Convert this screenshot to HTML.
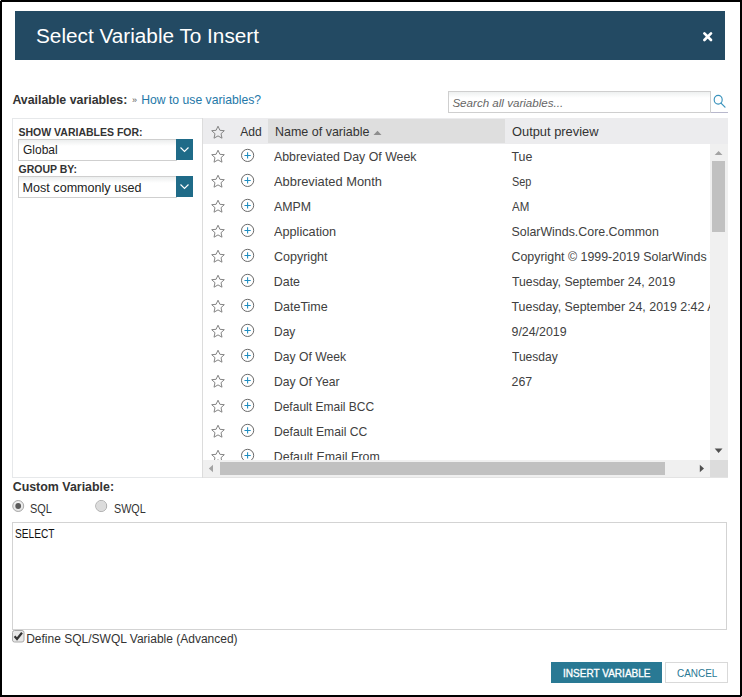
<!DOCTYPE html>
<html><head><meta charset="utf-8"><style>
html,body{margin:0;padding:0;}
body{width:742px;height:697px;position:relative;overflow:hidden;background:#fff;font-family:"Liberation Sans",sans-serif;}
.t{position:absolute;white-space:nowrap;}
.r{position:absolute;}
</style></head><body>
<div class="r" style="left:0px;top:0px;width:742px;height:697px;background:#fff;border:2px solid #000;box-sizing:border-box;"></div>
<div class="r" style="left:0px;top:0px;width:1px;height:1px;background:#c8c8c8;"></div>
<div class="r" style="left:741px;top:696px;width:1px;height:1px;background:#c8c8c8;"></div>
<div class="r" style="left:15px;top:11px;width:710px;height:49px;background:#234a63;"></div>
<div class="t" style="left:36.00px;top:26.24px;font-size:20.75px;line-height:20.75px;color:#fff;font-weight:normal;font-style:normal;">Select Variable To Insert</div>
<svg class="r" style="left:702px;top:31px" width="12" height="12" viewBox="0 0 12 12"><path d="M2.4 2.4L9 9M9 2.4L2.4 9" stroke="#fff" stroke-width="2.7" stroke-linecap="round"/></svg>
<div class="t" style="left:12.40px;top:93.54px;font-size:12.36px;line-height:12.36px;color:#333;font-weight:bold;font-style:normal;">Available variables:</div>
<div class="t" style="left:132.00px;top:95.88px;font-size:9px;line-height:9px;color:#555;font-weight:normal;font-style:normal;">&raquo;</div>
<div class="t" style="left:141.20px;top:93.67px;font-size:12.2px;line-height:12.2px;color:#2478a8;font-weight:normal;font-style:normal;">How to use variables?</div>
<div class="r" style="left:448px;top:91px;width:263px;height:22px;background:linear-gradient(#eef0f0 0px,#fff 6px);border:1px solid #cfcfcf;box-sizing:border-box;"></div>
<div class="t" style="left:452.40px;top:96.68px;font-size:11.6px;line-height:11.6px;color:#666;font-weight:normal;font-style:italic;">Search all variables...</div>
<div class="r" style="left:711px;top:112px;width:17px;height:1px;background:#b8b8cc;"></div>
<svg class="r" style="left:711px;top:92px" width="17" height="18" viewBox="0 0 17 18"><ellipse cx="7.2" cy="7.7" rx="4.0" ry="4.4" fill="none" stroke="#3a93bd" stroke-width="1.15"/><path d="M10 11.2L14 15.2" stroke="#3a93bd" stroke-width="1.2" stroke-linecap="round"/></svg>
<div class="r" style="left:12px;top:118px;width:191px;height:360px;border:1px solid #e6e8ea;box-sizing:border-box;"></div>
<div class="t" style="left:18.50px;top:127.11px;font-size:10.5px;line-height:10.5px;color:#333;font-weight:bold;font-style:normal;">SHOW VARIABLES FOR:</div>
<div class="r" style="left:18px;top:139px;width:159px;height:22px;background:linear-gradient(#eceeee 0px,#fff 6px);border:1px solid #cfcfcf;box-sizing:border-box;"></div>
<div class="r" style="left:176px;top:139px;width:17px;height:21px;background:#1f6b88;"></div>
<svg class="r" style="left:176px;top:139px" width="17" height="21" viewBox="0 0 17 21"><path d="M4.5 8.5L8.5 12.5L12.5 8.5" fill="none" stroke="#fff" stroke-width="1.1"/></svg>
<div class="t" style="left:22.60px;top:144.42px;font-size:12.5px;line-height:12.5px;color:#222;font-weight:normal;font-style:normal;transform:scaleX(0.9576);transform-origin:0 0;">Global</div>
<div class="t" style="left:18.50px;top:164.31px;font-size:10.5px;line-height:10.5px;color:#333;font-weight:bold;font-style:normal;">GROUP BY:</div>
<div class="r" style="left:18px;top:176px;width:159px;height:22px;background:linear-gradient(#eceeee 0px,#fff 6px);border:1px solid #cfcfcf;box-sizing:border-box;"></div>
<div class="r" style="left:176px;top:176px;width:17px;height:21px;background:#1f6b88;"></div>
<svg class="r" style="left:176px;top:176px" width="17" height="21" viewBox="0 0 17 21"><path d="M4.5 8.5L8.5 12.5L12.5 8.5" fill="none" stroke="#fff" stroke-width="1.1"/></svg>
<div class="t" style="left:22.60px;top:181.74px;font-size:12.59px;line-height:12.59px;color:#222;font-weight:normal;font-style:normal;">Most commonly used</div>
<div class="r" style="left:202px;top:118px;width:1px;height:360px;background:#dcdcdc;"></div>
<div class="r" style="left:203px;top:118px;width:525px;height:26px;background:#ececee;"></div>
<div class="r" style="left:268px;top:119px;width:237px;height:24px;background:#dedede;"></div>
<svg class="r" style="left:210px;top:124.5px" width="16" height="15" viewBox="0 0 16 15"><path d="M8 1.2L9.9 5.3L14.3 5.7L11 8.7L12 13.2L8 10.9L4 13.2L5 8.7L1.7 5.7L6.1 5.3Z" fill="none" stroke="#858585" stroke-width="1" stroke-linejoin="round"/></svg>
<div class="t" style="left:240.20px;top:125.76px;font-size:12.1px;line-height:12.1px;color:#333;font-weight:normal;font-style:normal;">Add</div>
<div class="t" style="left:274.50px;top:126.03px;font-size:12.49px;line-height:12.49px;color:#333;font-weight:normal;font-style:normal;transform:scaleX(0.9999);transform-origin:0 0;">Name of variable</div>
<svg class="r" style="left:373px;top:130px" width="9" height="6" viewBox="0 0 9 6"><path d="M0.5 5L4.5 0.8L8.5 5Z" fill="#8e8e8e"/></svg>
<div class="t" style="left:511.50px;top:126.03px;font-size:12.49px;line-height:12.49px;color:#333;font-weight:normal;font-style:normal;transform:scaleX(1.0298);transform-origin:0 0;">Output preview</div>
<div class="r" style="left:203px;top:144px;width:507px;height:316px;overflow:hidden">
<svg class="r" style="left:7px;top:4.5px" width="16" height="15" viewBox="0 0 16 15"><path d="M8 1.2L9.9 5.3L14.3 5.7L11 8.7L12 13.2L8 10.9L4 13.2L5 8.7L1.7 5.7L6.1 5.3Z" fill="none" stroke="#858585" stroke-width="1" stroke-linejoin="round"/></svg>
<svg class="r" style="left:37px;top:4px" width="15" height="15" viewBox="0 0 15 15"><circle cx="7.6" cy="7.4" r="6.1" fill="none" stroke="#6a6a6a" stroke-width="1"/><path d="M7.6 4.3V10.5M4.5 7.4H10.7" stroke="#1e8cc0" stroke-width="1.05"/></svg>
<div class="t" style="left:70.80px;top:6.50px;font-size:12.4px;line-height:12.4px;color:#404040;font-weight:normal;font-style:normal;transform:scaleX(0.9965);transform-origin:0 0;">Abbreviated Day Of Week</div>
<div class="t" style="left:308.50px;top:6.50px;font-size:12.4px;line-height:12.4px;color:#404040;font-weight:normal;font-style:normal;">Tue</div>
<svg class="r" style="left:7px;top:29.5px" width="16" height="15" viewBox="0 0 16 15"><path d="M8 1.2L9.9 5.3L14.3 5.7L11 8.7L12 13.2L8 10.9L4 13.2L5 8.7L1.7 5.7L6.1 5.3Z" fill="none" stroke="#858585" stroke-width="1" stroke-linejoin="round"/></svg>
<svg class="r" style="left:37px;top:29px" width="15" height="15" viewBox="0 0 15 15"><circle cx="7.6" cy="7.4" r="6.1" fill="none" stroke="#6a6a6a" stroke-width="1"/><path d="M7.6 4.3V10.5M4.5 7.4H10.7" stroke="#1e8cc0" stroke-width="1.05"/></svg>
<div class="t" style="left:70.80px;top:31.50px;font-size:12.4px;line-height:12.4px;color:#404040;font-weight:normal;font-style:normal;transform:scaleX(1.0377);transform-origin:0 0;">Abbreviated Month</div>
<div class="t" style="left:308.50px;top:31.50px;font-size:12.4px;line-height:12.4px;color:#404040;font-weight:normal;font-style:normal;transform:scaleX(0.8756);transform-origin:0 0;">Sep</div>
<svg class="r" style="left:7px;top:54.5px" width="16" height="15" viewBox="0 0 16 15"><path d="M8 1.2L9.9 5.3L14.3 5.7L11 8.7L12 13.2L8 10.9L4 13.2L5 8.7L1.7 5.7L6.1 5.3Z" fill="none" stroke="#858585" stroke-width="1" stroke-linejoin="round"/></svg>
<svg class="r" style="left:37px;top:54px" width="15" height="15" viewBox="0 0 15 15"><circle cx="7.6" cy="7.4" r="6.1" fill="none" stroke="#6a6a6a" stroke-width="1"/><path d="M7.6 4.3V10.5M4.5 7.4H10.7" stroke="#1e8cc0" stroke-width="1.05"/></svg>
<div class="t" style="left:70.80px;top:56.50px;font-size:12.4px;line-height:12.4px;color:#404040;font-weight:normal;font-style:normal;transform:scaleX(0.9973);transform-origin:0 0;">AMPM</div>
<div class="t" style="left:308.50px;top:56.50px;font-size:12.4px;line-height:12.4px;color:#404040;font-weight:normal;font-style:normal;transform:scaleX(0.9297);transform-origin:0 0;">AM</div>
<svg class="r" style="left:7px;top:79.5px" width="16" height="15" viewBox="0 0 16 15"><path d="M8 1.2L9.9 5.3L14.3 5.7L11 8.7L12 13.2L8 10.9L4 13.2L5 8.7L1.7 5.7L6.1 5.3Z" fill="none" stroke="#858585" stroke-width="1" stroke-linejoin="round"/></svg>
<svg class="r" style="left:37px;top:79px" width="15" height="15" viewBox="0 0 15 15"><circle cx="7.6" cy="7.4" r="6.1" fill="none" stroke="#6a6a6a" stroke-width="1"/><path d="M7.6 4.3V10.5M4.5 7.4H10.7" stroke="#1e8cc0" stroke-width="1.05"/></svg>
<div class="t" style="left:70.80px;top:81.50px;font-size:12.4px;line-height:12.4px;color:#404040;font-weight:normal;font-style:normal;transform:scaleX(1.0248);transform-origin:0 0;">Application</div>
<div class="t" style="left:308.50px;top:81.50px;font-size:12.4px;line-height:12.4px;color:#404040;font-weight:normal;font-style:normal;">SolarWinds.Core.Common</div>
<svg class="r" style="left:7px;top:104.5px" width="16" height="15" viewBox="0 0 16 15"><path d="M8 1.2L9.9 5.3L14.3 5.7L11 8.7L12 13.2L8 10.9L4 13.2L5 8.7L1.7 5.7L6.1 5.3Z" fill="none" stroke="#858585" stroke-width="1" stroke-linejoin="round"/></svg>
<svg class="r" style="left:37px;top:104px" width="15" height="15" viewBox="0 0 15 15"><circle cx="7.6" cy="7.4" r="6.1" fill="none" stroke="#6a6a6a" stroke-width="1"/><path d="M7.6 4.3V10.5M4.5 7.4H10.7" stroke="#1e8cc0" stroke-width="1.05"/></svg>
<div class="t" style="left:70.80px;top:106.50px;font-size:12.4px;line-height:12.4px;color:#404040;font-weight:normal;font-style:normal;transform:scaleX(1.0093);transform-origin:0 0;">Copyright</div>
<div class="t" style="left:308.50px;top:106.50px;font-size:12.4px;line-height:12.4px;color:#404040;font-weight:normal;font-style:normal;">Copyright &copy; 1999-2019 SolarWinds Worldwide, LLC</div>
<svg class="r" style="left:7px;top:129.5px" width="16" height="15" viewBox="0 0 16 15"><path d="M8 1.2L9.9 5.3L14.3 5.7L11 8.7L12 13.2L8 10.9L4 13.2L5 8.7L1.7 5.7L6.1 5.3Z" fill="none" stroke="#858585" stroke-width="1" stroke-linejoin="round"/></svg>
<svg class="r" style="left:37px;top:129px" width="15" height="15" viewBox="0 0 15 15"><circle cx="7.6" cy="7.4" r="6.1" fill="none" stroke="#6a6a6a" stroke-width="1"/><path d="M7.6 4.3V10.5M4.5 7.4H10.7" stroke="#1e8cc0" stroke-width="1.05"/></svg>
<div class="t" style="left:70.80px;top:131.50px;font-size:12.4px;line-height:12.4px;color:#404040;font-weight:normal;font-style:normal;transform:scaleX(1.0);transform-origin:0 0;">Date</div>
<div class="t" style="left:308.50px;top:131.50px;font-size:12.4px;line-height:12.4px;color:#404040;font-weight:normal;font-style:normal;transform:scaleX(0.9879);transform-origin:0 0;">Tuesday, September 24, 2019</div>
<svg class="r" style="left:7px;top:154.5px" width="16" height="15" viewBox="0 0 16 15"><path d="M8 1.2L9.9 5.3L14.3 5.7L11 8.7L12 13.2L8 10.9L4 13.2L5 8.7L1.7 5.7L6.1 5.3Z" fill="none" stroke="#858585" stroke-width="1" stroke-linejoin="round"/></svg>
<svg class="r" style="left:37px;top:154px" width="15" height="15" viewBox="0 0 15 15"><circle cx="7.6" cy="7.4" r="6.1" fill="none" stroke="#6a6a6a" stroke-width="1"/><path d="M7.6 4.3V10.5M4.5 7.4H10.7" stroke="#1e8cc0" stroke-width="1.05"/></svg>
<div class="t" style="left:70.80px;top:156.50px;font-size:12.4px;line-height:12.4px;color:#404040;font-weight:normal;font-style:normal;transform:scaleX(1.0093);transform-origin:0 0;">DateTime</div>
<div class="t" style="left:308.50px;top:156.50px;font-size:12.4px;line-height:12.4px;color:#404040;font-weight:normal;font-style:normal;">Tuesday, September 24, 2019 2:42 AM</div>
<svg class="r" style="left:7px;top:179.5px" width="16" height="15" viewBox="0 0 16 15"><path d="M8 1.2L9.9 5.3L14.3 5.7L11 8.7L12 13.2L8 10.9L4 13.2L5 8.7L1.7 5.7L6.1 5.3Z" fill="none" stroke="#858585" stroke-width="1" stroke-linejoin="round"/></svg>
<svg class="r" style="left:37px;top:179px" width="15" height="15" viewBox="0 0 15 15"><circle cx="7.6" cy="7.4" r="6.1" fill="none" stroke="#6a6a6a" stroke-width="1"/><path d="M7.6 4.3V10.5M4.5 7.4H10.7" stroke="#1e8cc0" stroke-width="1.05"/></svg>
<div class="t" style="left:70.80px;top:181.50px;font-size:12.4px;line-height:12.4px;color:#404040;font-weight:normal;font-style:normal;transform:scaleX(0.9644);transform-origin:0 0;">Day</div>
<div class="t" style="left:308.50px;top:181.50px;font-size:12.4px;line-height:12.4px;color:#404040;font-weight:normal;font-style:normal;">9/24/2019</div>
<svg class="r" style="left:7px;top:204.5px" width="16" height="15" viewBox="0 0 16 15"><path d="M8 1.2L9.9 5.3L14.3 5.7L11 8.7L12 13.2L8 10.9L4 13.2L5 8.7L1.7 5.7L6.1 5.3Z" fill="none" stroke="#858585" stroke-width="1" stroke-linejoin="round"/></svg>
<svg class="r" style="left:37px;top:204px" width="15" height="15" viewBox="0 0 15 15"><circle cx="7.6" cy="7.4" r="6.1" fill="none" stroke="#6a6a6a" stroke-width="1"/><path d="M7.6 4.3V10.5M4.5 7.4H10.7" stroke="#1e8cc0" stroke-width="1.05"/></svg>
<div class="t" style="left:70.80px;top:206.50px;font-size:12.4px;line-height:12.4px;color:#404040;font-weight:normal;font-style:normal;transform:scaleX(0.9796);transform-origin:0 0;">Day Of Week</div>
<div class="t" style="left:308.50px;top:206.50px;font-size:12.4px;line-height:12.4px;color:#404040;font-weight:normal;font-style:normal;transform:scaleX(0.9726);transform-origin:0 0;">Tuesday</div>
<svg class="r" style="left:7px;top:229.5px" width="16" height="15" viewBox="0 0 16 15"><path d="M8 1.2L9.9 5.3L14.3 5.7L11 8.7L12 13.2L8 10.9L4 13.2L5 8.7L1.7 5.7L6.1 5.3Z" fill="none" stroke="#858585" stroke-width="1" stroke-linejoin="round"/></svg>
<svg class="r" style="left:37px;top:229px" width="15" height="15" viewBox="0 0 15 15"><circle cx="7.6" cy="7.4" r="6.1" fill="none" stroke="#6a6a6a" stroke-width="1"/><path d="M7.6 4.3V10.5M4.5 7.4H10.7" stroke="#1e8cc0" stroke-width="1.05"/></svg>
<div class="t" style="left:70.80px;top:231.50px;font-size:12.4px;line-height:12.4px;color:#404040;font-weight:normal;font-style:normal;transform:scaleX(0.9807);transform-origin:0 0;">Day Of Year</div>
<div class="t" style="left:308.50px;top:231.50px;font-size:12.4px;line-height:12.4px;color:#404040;font-weight:normal;font-style:normal;">267</div>
<svg class="r" style="left:7px;top:254.5px" width="16" height="15" viewBox="0 0 16 15"><path d="M8 1.2L9.9 5.3L14.3 5.7L11 8.7L12 13.2L8 10.9L4 13.2L5 8.7L1.7 5.7L6.1 5.3Z" fill="none" stroke="#858585" stroke-width="1" stroke-linejoin="round"/></svg>
<svg class="r" style="left:37px;top:254px" width="15" height="15" viewBox="0 0 15 15"><circle cx="7.6" cy="7.4" r="6.1" fill="none" stroke="#6a6a6a" stroke-width="1"/><path d="M7.6 4.3V10.5M4.5 7.4H10.7" stroke="#1e8cc0" stroke-width="1.05"/></svg>
<div class="t" style="left:70.80px;top:256.50px;font-size:12.4px;line-height:12.4px;color:#404040;font-weight:normal;font-style:normal;transform:scaleX(0.97);transform-origin:0 0;">Default Email BCC</div>
<svg class="r" style="left:7px;top:279.5px" width="16" height="15" viewBox="0 0 16 15"><path d="M8 1.2L9.9 5.3L14.3 5.7L11 8.7L12 13.2L8 10.9L4 13.2L5 8.7L1.7 5.7L6.1 5.3Z" fill="none" stroke="#858585" stroke-width="1" stroke-linejoin="round"/></svg>
<svg class="r" style="left:37px;top:279px" width="15" height="15" viewBox="0 0 15 15"><circle cx="7.6" cy="7.4" r="6.1" fill="none" stroke="#6a6a6a" stroke-width="1"/><path d="M7.6 4.3V10.5M4.5 7.4H10.7" stroke="#1e8cc0" stroke-width="1.05"/></svg>
<div class="t" style="left:70.80px;top:281.50px;font-size:12.4px;line-height:12.4px;color:#404040;font-weight:normal;font-style:normal;transform:scaleX(0.982);transform-origin:0 0;">Default Email CC</div>
<svg class="r" style="left:7px;top:304.5px" width="16" height="15" viewBox="0 0 16 15"><path d="M8 1.2L9.9 5.3L14.3 5.7L11 8.7L12 13.2L8 10.9L4 13.2L5 8.7L1.7 5.7L6.1 5.3Z" fill="none" stroke="#858585" stroke-width="1" stroke-linejoin="round"/></svg>
<svg class="r" style="left:37px;top:304px" width="15" height="15" viewBox="0 0 15 15"><circle cx="7.6" cy="7.4" r="6.1" fill="none" stroke="#6a6a6a" stroke-width="1"/><path d="M7.6 4.3V10.5M4.5 7.4H10.7" stroke="#1e8cc0" stroke-width="1.05"/></svg>
<div class="t" style="left:70.80px;top:306.50px;font-size:12.4px;line-height:12.4px;color:#404040;font-weight:normal;font-style:normal;">Default Email From</div>
</div>
<div class="r" style="left:710px;top:144px;width:18px;height:316px;background:#f0f0f0;"></div>
<svg class="r" style="left:714px;top:150px" width="10" height="6" viewBox="0 0 10 6"><path d="M0.7 5L4.6 1L8.5 5Z" fill="#a3a3a3"/></svg>
<div class="r" style="left:712px;top:161px;width:13px;height:71px;background:#c1c1c1;"></div>
<svg class="r" style="left:714px;top:448px" width="10" height="6" viewBox="0 0 10 6"><path d="M0.7 0.6L4.6 5L8.5 0.6Z" fill="#505050"/></svg>
<div class="r" style="left:203px;top:460px;width:507px;height:17px;background:#f0f0f0;"></div>
<svg class="r" style="left:208px;top:464px" width="6" height="9" viewBox="0 0 6 9"><path d="M5 0.7L0.8 4.5L5 8.2Z" fill="#a3a3a3"/></svg>
<div class="r" style="left:220px;top:462px;width:445px;height:13px;background:#c1c1c1;"></div>
<svg class="r" style="left:699px;top:464px" width="6" height="9" viewBox="0 0 6 9"><path d="M0.8 0.7L5 4.5L0.8 8.2Z" fill="#505050"/></svg>
<div class="r" style="left:710px;top:460px;width:18px;height:17px;background:#dcdcdc;"></div>
<div class="r" style="left:203px;top:477px;width:525px;height:1px;background:#e3e3e3;"></div>
<div class="t" style="left:12.70px;top:480.69px;font-size:12.42px;line-height:12.42px;color:#333;font-weight:bold;font-style:normal;">Custom Variable:</div>
<svg class="r" style="left:12px;top:500px" width="13" height="13" viewBox="0 0 13 13"><defs><radialGradient id="rg1" cx="50%" cy="40%" r="60%"><stop offset="0" stop-color="#fff"/><stop offset="1" stop-color="#dedede"/></radialGradient></defs><circle cx="6.2" cy="6" r="5.5" fill="url(#rg1)" stroke="#aaaaaa" stroke-width="1"/><circle cx="6.2" cy="6" r="2.9" fill="#5a5a5a"/></svg>
<div class="t" style="left:30.20px;top:502.64px;font-size:12px;line-height:12px;color:#333;font-weight:normal;font-style:normal;transform:scaleX(0.9121);transform-origin:0 0;">SQL</div>
<svg class="r" style="left:95px;top:500px" width="13" height="13" viewBox="0 0 13 13"><defs><radialGradient id="rg2" cx="50%" cy="40%" r="60%"><stop offset="0" stop-color="#fff"/><stop offset="1" stop-color="#dedede"/></radialGradient></defs><circle cx="6.2" cy="6" r="5.5" fill="url(#rg2)" stroke="#aaaaaa" stroke-width="1"/><circle cx="6.2" cy="6" r="5" fill="#dcdcdc"/></svg>
<div class="t" style="left:113.80px;top:502.64px;font-size:12px;line-height:12px;color:#333;font-weight:normal;font-style:normal;transform:scaleX(0.897);transform-origin:0 0;">SWQL</div>
<div class="r" style="left:12px;top:522px;width:715px;height:108px;background:#fff;border:1px solid #d3d3d3;box-sizing:border-box;"></div>
<div class="t" style="left:15.30px;top:528.27px;font-size:12.2px;line-height:12.2px;color:#111;font-weight:normal;font-style:normal;transform:scaleX(0.8344);transform-origin:0 0;">SELECT</div>
<svg class="r" style="left:12px;top:630px" width="13" height="13" viewBox="0 0 13 13"><rect x="0.5" y="0.5" width="11.5" height="11.5" rx="2" fill="#e8e8e8" stroke="#a9a9a9"/><path d="M2.6 6.3L5 9L10 2.8" fill="none" stroke="#333" stroke-width="2.2"/></svg>
<div class="t" style="left:26.20px;top:633.34px;font-size:12.0px;line-height:12.0px;color:#333;font-weight:normal;font-style:normal;">Define SQL/SWQL Variable (Advanced)</div>
<div class="r" style="left:551px;top:662px;width:111px;height:21px;background:#297994;"></div>
<div class="t" style="left:562.90px;top:667.60px;font-size:11.1px;line-height:11.1px;color:#fff;font-weight:normal;font-style:normal;transform:scaleX(0.9045);transform-origin:0 0;-webkit-text-stroke:0.35px #fff;">INSERT VARIABLE</div>
<div class="r" style="left:665px;top:662px;width:63px;height:21px;background:#fff;border:1px solid #d9d9d9;box-sizing:border-box;"></div>
<div class="t" style="left:676.60px;top:667.79px;font-size:11px;line-height:11px;color:#297994;font-weight:normal;font-style:normal;transform:scaleX(0.9053);transform-origin:0 0;">CANCEL</div>
</body></html>
